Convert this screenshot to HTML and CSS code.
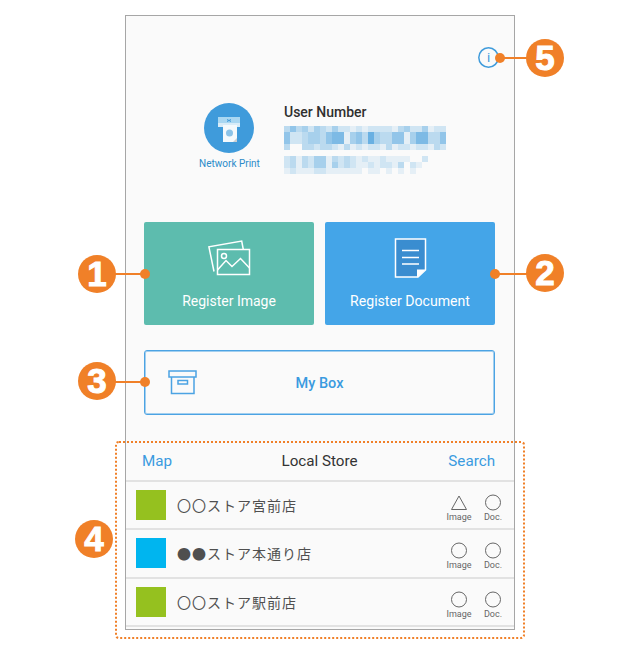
FILE: index.html
```html
<!DOCTYPE html>
<html lang="en">

<head>
    <meta charset="UTF-8">
    <meta name="viewport" content="width=device-width, initial-scale=1.0">
    <title>Network Print</title>
    <link rel="stylesheet" href="styles.css">
</head>

<body>
    <div class="stage">
        <div class="phone">
            <div class="top-bar">
                <svg class="info-icon" width="21" height="21" viewBox="0 0 21 21">
                    <circle cx="10.500" cy="10.500" r="9.700" fill="none" stroke="#3f9bdb" stroke-width="1.500"/>
                    <text x="10.500" y="15" text-anchor="middle">i</text>
                </svg>
            </div>

            <div class="profile">
                <div class="logo">
                    <svg class="logo-icon" width="50" height="50" viewBox="0 0 50 50">
                        <circle cx="25" cy="25" r="25" fill="#3f9bdb"/>
                        <rect x="14" y="14" width="22" height="6" fill="#a9d7f2"/>
                        <rect x="14" y="20" width="22" height="4" fill="#d8ecf8"/>
                        <path d="M19 22H33V39H19Z" fill="#f4f9fc"/>
                        <path d="M33 35V39H29Z" fill="#c9ced2"/>
                        <circle cx="25.500" cy="30" r="3.500" fill="#8cc3e8"/>
                        <path d="M23 16.500L27 18.500M27 16.500L23 18.500" stroke="#3f9bdb" stroke-width="1"/>
                    </svg>
                    <span class="logo-name">Network Print</span>
                </div>
                <div class="user">
                    <div class="user-title">User Number</div>
                    <div class="mosaic" data-rows="353424324221212222134224122212|522344356614537433551466335|300332332131212213122122132"></div>
                    <div class="mosaic mosaic-second" data-rows="231324413232121121111002|231324414232112122130210|121112211111101101010100"></div>
                </div>
            </div>

            <div class="actions">
                <a class="action action-image" href="#">
                    <svg width="44" height="36" viewBox="0 0 44 36" fill="none" stroke="#fff" stroke-width="1.500">
                        <path d="M6 31.500L.9 6.800 33.700 1 35.300 9.500"/>
                        <rect x="9.500" y="9.500" width="32" height="25"/>
                        <path d="M9.500 30L18 20.500 24 26.500 32.500 18.500 41.500 28"/>
                        <circle cx="16" cy="16" r="2.500"/>
                    </svg>
                    <span>Register Image</span>
                </a>
                <a class="action action-document" href="#">
                    <svg width="33" height="40" viewBox="0 0 33 40">
                        <path d="M1.500 1H31.500V32L24 39H1.500Z" fill="#3a8dd0" stroke="#fff" stroke-width="1.500"/>
                        <path d="M31.500 31.500H23V39.500Z" fill="#fff"/>
                        <path d="M8 12.500H25M8 19.500H25M8 26H25" stroke="#fff" stroke-width="1.500"/>
                    </svg>
                    <span>Register Document</span>
                </a>
            </div>

            <a class="my-box" href="#">
                <svg class="my-box-icon" width="30" height="25" viewBox="0 0 30 25" fill="none" stroke="#4ba3e3" stroke-width="1.500">
                    <rect x="1" y="1" width="27" height="6"/>
                    <path d="M3.500 7V23.500H26V7"/>
                    <rect x="10" y="10.500" width="9.500" height="3.500"/>
                </svg>
                <span>My Box</span>
            </a>

            <div class="store">
                <div class="store-head">
                    <a href="#">Map</a>
                    <span class="store-title">Local Store</span>
                    <a class="store-search" href="#">Search</a>
                </div>

                <div class="store-row">
                    <div class="swatch swatch-green"></div>
                    <div class="store-name">〇〇ストア宮前店</div>
                    <div class="status">
                        <svg width="18" height="18" viewBox="0 0 18 18" fill="none" stroke="#666" stroke-width="1"><path d="M9 2L16.500 15.500H1.500Z"/></svg>
                        <span>Image</span>
                    </div>
                    <div class="status">
                        <svg width="18" height="18" viewBox="0 0 18 18" fill="none" stroke="#666" stroke-width="1"><circle cx="9" cy="8.500" r="7.500"/></svg>
                        <span>Doc.</span>
                    </div>
                </div>

                <div class="store-row">
                    <div class="swatch swatch-blue"></div>
                    <div class="store-name">●●ストア本通り店</div>
                    <div class="status">
                        <svg width="18" height="18" viewBox="0 0 18 18" fill="none" stroke="#666" stroke-width="1"><circle cx="9" cy="8.500" r="7.500"/></svg>
                        <span>Image</span>
                    </div>
                    <div class="status">
                        <svg width="18" height="18" viewBox="0 0 18 18" fill="none" stroke="#666" stroke-width="1"><circle cx="9" cy="8.500" r="7.500"/></svg>
                        <span>Doc.</span>
                    </div>
                </div>

                <div class="store-row">
                    <div class="swatch swatch-green"></div>
                    <div class="store-name">〇〇ストア駅前店</div>
                    <div class="status">
                        <svg width="18" height="18" viewBox="0 0 18 18" fill="none" stroke="#666" stroke-width="1"><circle cx="9" cy="8.500" r="7.500"/></svg>
                        <span>Image</span>
                    </div>
                    <div class="status">
                        <svg width="18" height="18" viewBox="0 0 18 18" fill="none" stroke="#666" stroke-width="1"><circle cx="9" cy="8.500" r="7.500"/></svg>
                        <span>Doc.</span>
                    </div>
                </div>
            </div>
        </div>

        <!-- annotations on top of the screenshot -->
        <div class="store-outline"></div>

        <div class="leader leader-1"></div>
        <div class="leader leader-2"></div>
        <div class="leader leader-3"></div>
        <div class="leader leader-5"></div>

        <div class="badge badge-1">1</div>
        <div class="badge badge-2">2</div>
        <div class="badge badge-3">3</div>
        <div class="badge badge-4">4</div>
        <div class="badge badge-5">5</div>
    </div>

    <script src="mosaic.js"></script>
</body>

</html>
```

FILE: styles.css
```css
* {
    box-sizing: border-box;
}

body {
    margin: 0;
    background: #fff;
    font-family: Roboto, "Noto Sans CJK JP", sans-serif;
    color: #333;
}

a {
    text-decoration: none;
}

.stage {
    position: relative;
    width: 640px;
    height: 654px;
    padding: 15px 125px 0;
    overflow: hidden;
}

.phone {
    display: flex;
    flex-direction: column;
    height: 615px;
    border: 1px solid #a6a6a6;
    background: #fafafa;
}

.top-bar {
    display: flex;
    justify-content: flex-end;
    padding: 31px 15px 0 0;
}

.info-icon text {
    fill: #3f9bdb;
    font-size: 13px;
}

.profile {
    display: flex;
    gap: 24px;
    margin-top: 35px;
    padding-left: 72px;
}

.logo {
    display: flex;
    flex-direction: column;
    align-items: center;
    width: 62px;
}

.logo-name {
    margin: 5px 0 0 1px;
    font-size: 10px;
    line-height: 12px;
    color: #2b8bc9;
    white-space: nowrap;
}

.user-title {
    font-size: 14px;
    font-weight: 500;
    line-height: 18px;
    color: #2f2f2f;
}

.mosaic {
    display: grid;
    grid-template-columns: repeat(27, 6px);
    grid-template-rows: 6px 12px 6px;
    margin-top: 5px;
}

.mosaic-second {
    grid-template-rows: 6px 6px 6px;
    margin-top: 6px;
}

.actions {
    display: flex;
    gap: 11px;
    margin-top: 48px;
    padding-left: 18px;
}

.action {
    display: flex;
    flex-direction: column;
    align-items: center;
    width: 170px;
    height: 103px;
    border-radius: 2px;
    color: #fff;
    font-size: 14px;
    line-height: 18px;
}

.action-image {
    padding-top: 18px;
    background: #5dbcae;
}

.action-image svg {
    margin-left: 2px;
}

.action-image span {
    margin-top: 16px;
}

.action-document {
    padding-top: 16px;
    background: #44a5e8;
}

.action-document span {
    margin-top: 14px;
    font-size: 14.100px;
}

.my-box {
    display: flex;
    align-items: center;
    justify-content: center;
    position: relative;
    width: 351px;
    height: 65px;
    margin: 25px 0 0 18px;
    padding-top: 2px;
    border: 1px solid #4ba3e3;
    border-radius: 3px;
    box-shadow: inset 0 0 0 1px rgba(75, 163, 227, 0.5);
    color: #3a9be0;
    font-size: 14.500px;
    font-weight: 500;
}

.my-box-icon {
    position: absolute;
    left: 23px;
    top: 19px;
}

.store {
    margin-top: auto;
    padding-bottom: 2px;
}

.store-head {
    display: grid;
    grid-template-columns: 1fr auto 1fr;
    align-items: center;
    height: 39px;
    padding: 0 19px 0 16px;
    border-bottom: 2px solid #e2e2e2;
    font-size: 15.200px;
}

.store-head a {
    color: #3a9be0;
}

.store-search {
    justify-self: end;
}

.store-title {
    margin-left: 2px;
    color: #333;
}

.store-row {
    display: flex;
    align-items: center;
    height: 48.500px;
    padding: 0 4px 0 10px;
    border-bottom: 2px solid #e2e2e2;
}

.swatch {
    width: 30px;
    height: 30px;
    flex-shrink: 0;
}

.swatch-green {
    background: #95c11f;
}

.swatch-blue {
    background: #00b5ef;
}

.store-name {
    flex: 1;
    margin-left: 11px;
    font-size: 14px;
    letter-spacing: 1px;
    color: #4f4f4f;
}

.status {
    display: flex;
    flex-direction: column;
    align-items: center;
    width: 34px;
    padding-top: 6px;
    font-size: 9px;
    line-height: 10px;
    color: #666;
}

.status svg {
    display: block;
}

.store-outline {
    position: absolute;
    left: 115px;
    top: 441px;
    width: 410px;
    height: 198px;
    border: 2px dotted #f08028;
    border-radius: 4px;
}

.leader {
    position: absolute;
    height: 2px;
    background: #f08028;
}

.leader::after {
    content: "";
    position: absolute;
    top: -4px;
    width: 10px;
    height: 10px;
    border-radius: 50%;
    background: #f08028;
}

.leader-1 {
    left: 110px;
    top: 273px;
    width: 35px;
}

.leader-1::after {
    right: -5px;
}

.leader-2 {
    left: 495px;
    top: 273px;
    width: 35px;
}

.leader-2::after {
    left: -5px;
}

.leader-3 {
    left: 110px;
    top: 381px;
    width: 35px;
}

.leader-3::after {
    right: -5px;
}

.leader-5 {
    left: 500px;
    top: 57px;
    width: 30px;
}

.leader-5::after {
    left: -5px;
}

.badge {
    position: absolute;
    width: 38px;
    height: 38px;
    border-radius: 50%;
    background: #f08028;
    color: #fff;
    font-family: "Liberation Sans", sans-serif;
    font-size: 35px;
    font-weight: bold;
    line-height: 38px;
    text-align: center;
    -webkit-text-stroke: 1px #fff;
}

.badge-1 {
    left: 78px;
    top: 255px;
}

.badge-2 {
    left: 526px;
    top: 254px;
}

.badge-3 {
    left: 78px;
    top: 362px;
}

.badge-4 {
    left: 75px;
    top: 520px;
}

.badge-5 {
    left: 526px;
    top: 39px;
}
```

FILE: mosaic.js
```js
// each digit is how strong the blue of one blurred cell is
document.querySelectorAll('.mosaic').forEach(function (mosaic) {
    mosaic.dataset.rows.split('|').forEach(function (row) {
        for (let i = 0; i < 27; i++) {
            const cell = document.createElement('div');
            const level = Number(row[i] || 0);
            cell.style.background = 'rgba(63, 155, 219, ' + level / 9 + ')';
            mosaic.appendChild(cell);
        }
    });
});
```
